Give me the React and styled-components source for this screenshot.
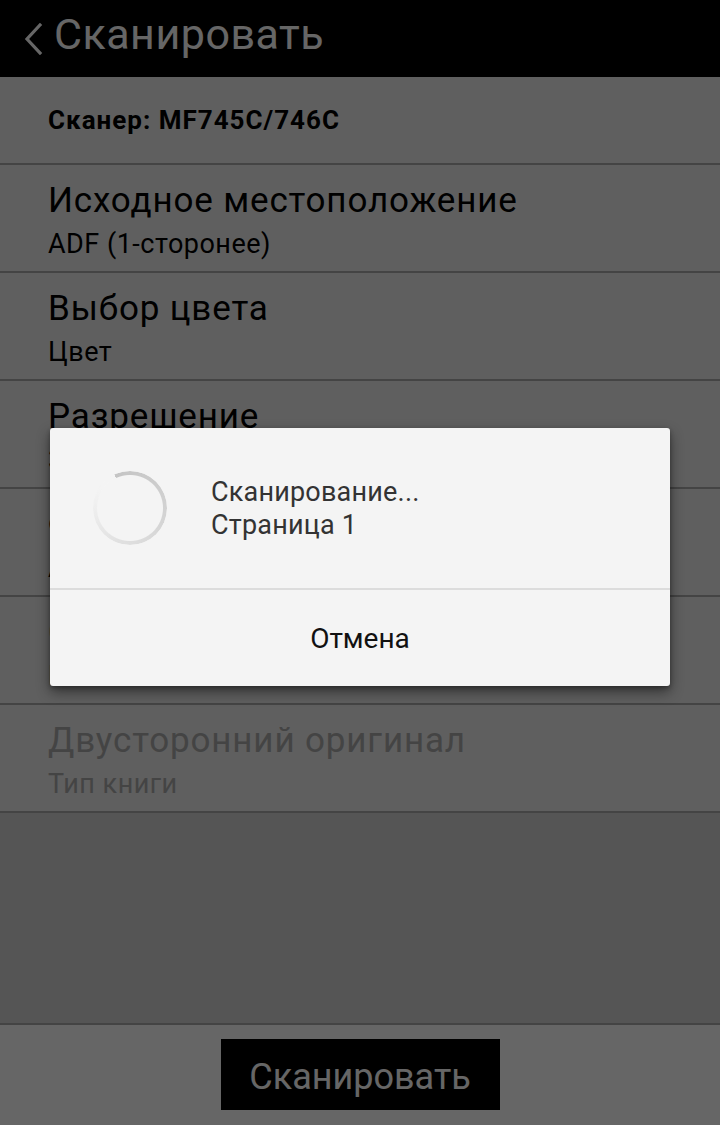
import React from "react";
import styled, { createGlobalStyle } from "styled-components";

const Global = createGlobalStyle`
  html, body { margin: 0; padding: 0; background: #000; }
  body { font-family: Roboto, "Noto Sans", sans-serif; -webkit-font-smoothing: antialiased; }
  #root { width: 720px; height: 1125px; }
`;

const Screen = styled.div`
  position: relative;
  width: 720px;
  height: 1125px;
  display: flex;
  flex-direction: column;
  overflow: hidden;
  background: #d5d5d5;
`;

const Header = styled.header`
  height: 77px;
  flex: none;
  background: #000;
  display: flex;
  align-items: center;
  gap: 10px;
  padding-left: 24px;
  box-sizing: border-box;
`;

const HeaderTitle = styled.h1`
  margin: 0;
  font-weight: 400;
  font-size: 43px;
  letter-spacing: 0.5px;
  color: #fff;
  line-height: 43px;
  padding-bottom: 9px;
`;

const List = styled.div`
  display: flex;
  flex-direction: column;
  background: #ededed;
  flex: none;
`;

const ScannerRow = styled.div`
  height: 88px;
  box-sizing: border-box;
  border-bottom: 2px solid #aaa;
  display: flex;
  align-items: center;
  padding-left: 48px;
  font-size: 26px;
  line-height: 30px;
  letter-spacing: 1px;
  font-weight: 700;
  color: #000;
`;

const Row = styled.div`
  height: 108px;
  box-sizing: border-box;
  border-bottom: 2px solid #aaa;
  padding: 16px 0 0 48px;
  color: ${(p) => (p.$disabled ? "#aaa" : "#000")};
`;

const RowTitle = styled.div`
  font-size: 35px;
  line-height: 40px;
  letter-spacing: 0.85px;
`;

const RowValue = styled.div`
  margin-top: 7px;
  font-size: 27px;
  line-height: 32px;
  letter-spacing: 0.5px;
`;

const Filler = styled.div`
  flex: 1;
  background: #d5d5d5;
`;

const BottomBar = styled.div`
  height: 102px;
  box-sizing: border-box;
  flex: none;
  border-top: 2px solid #aaa;
  background: #fff;
  display: flex;
  justify-content: center;
  align-items: flex-start;
  padding-top: 14px;
`;

const ScanButton = styled.button`
  width: 279px;
  height: 71px;
  border: none;
  background: #000;
  color: #fff;
  font-family: inherit;
  font-size: 36px;
  padding: 4px 0 0;
`;

const Dim = styled.div`
  position: absolute;
  inset: 0;
  background: rgba(0, 0, 0, 0.6);
`;

const Dialog = styled.div`
  position: absolute;
  left: 50px;
  top: 428px;
  width: 620px;
  background: #f4f4f4;
  border-radius: 3px;
  box-shadow: 0 6px 14px rgba(0, 0, 0, 0.45), 0 2px 4px rgba(0, 0, 0, 0.3);
  display: flex;
  flex-direction: column;
`;

const DialogBody = styled.div`
  height: 160px;
  display: flex;
  align-items: center;
  padding-left: 43px;
  gap: 44px;
  box-sizing: border-box;
`;

const Spinner = styled.div`
  width: 74px;
  height: 74px;
  border-radius: 50%;
  flex: none;
  background: conic-gradient(from 335deg, #c4c4c4 0deg, #d2d2d2 120deg, #e0e0e0 220deg, #efefef 300deg, #f4f4f4 330deg);
  -webkit-mask: radial-gradient(circle, transparent 32.5px, #000 33.5px);
  mask: radial-gradient(circle, transparent 32.5px, #000 33.5px);
`;

const Message = styled.div`
  font-size: 27px;
  line-height: 33px;
  letter-spacing: 0.2px;
  color: #333;
  margin-top: 2px;
`;

const Divider = styled.div`
  height: 2px;
  background: #dcdcdc;
`;

const CancelButton = styled.button`
  height: 96px;
  border: none;
  background: transparent;
  font-family: inherit;
  font-size: 28px;
  color: #111;
  padding: 0;
`;

const Chevron = () => (
  <svg width="20" height="32" viewBox="0 0 20 32" fill="none">
    <path d="M16 2 L3 16 L16 30" stroke="#fff" strokeWidth="3.2" strokeLinecap="square" />
  </svg>
);

const rows = [
  { title: "Исходное местоположение", value: "ADF (1-сторонее)" },
  { title: "Выбор цвета", value: "Цвет" },
  { title: "Разрешение", value: "300 x 300 dpi" },
  { title: "Формат", value: "A4" },
  { title: "Сохранить как", value: "PDF" },
  { title: "Двусторонний оригинал", value: "Тип книги", disabled: true },
];

export default function App() {
  return (
    <Screen>
      <Global />
      <Header>
        <Chevron />
        <HeaderTitle>Сканировать</HeaderTitle>
      </Header>
      <List>
        <ScannerRow>Сканер: MF745C/746C</ScannerRow>
        {rows.map((r) => (
          <Row key={r.title} $disabled={r.disabled}>
            <RowTitle>{r.title}</RowTitle>
            <RowValue>{r.value}</RowValue>
          </Row>
        ))}
      </List>
      <Filler />
      <BottomBar>
        <ScanButton>Сканировать</ScanButton>
      </BottomBar>
      <Dim />
      <Dialog>
        <DialogBody>
          <Spinner />
          <Message>
            Сканирование...
            <br />
            Страница 1
          </Message>
        </DialogBody>
        <Divider />
        <CancelButton>Отмена</CancelButton>
      </Dialog>
    </Screen>
  );
}
